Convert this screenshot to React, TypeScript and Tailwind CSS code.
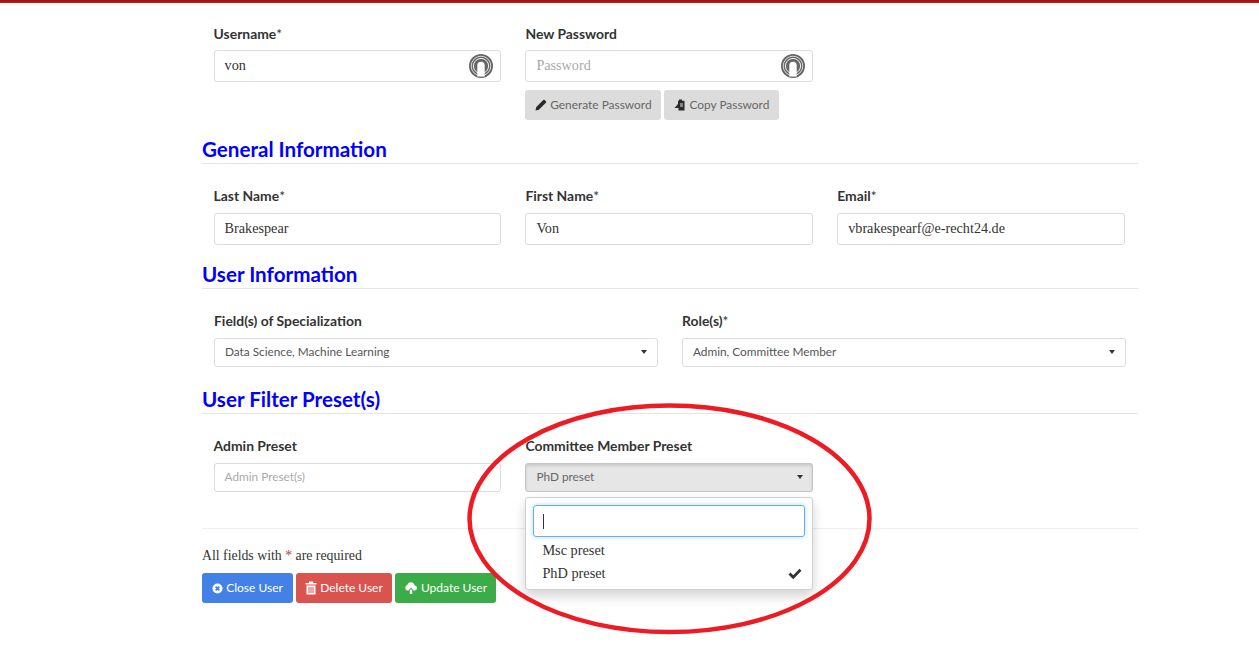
import React from "react";

const sans = "font-['Lato','Open_Sans',sans-serif]";
const serif = "font-['Liberation_Serif',serif]";

function Fingerprint() {
  return (
    <svg viewBox="0 0 24 24" className="h-[24px] w-[24px]">
      <circle cx="12" cy="12" r="12" fill="#666" />
      <circle cx="12" cy="12" r="9.800" fill="none" stroke="#d8d8d8" strokeWidth="1" />
      <circle cx="12" cy="12" r="7.600" fill="none" stroke="#f4f4f4" strokeWidth="1" />
      <path d="M8.300 22.500V11.500a3.700 3.700 0 0 1 7.400 0v11z" fill="#fff" />
    </svg>
  );
}

function Caret() {
  return <span className="h-0 w-0 border-x-[3.5px] border-t-[4px] border-x-transparent border-t-[#333]" />;
}

function Label({ children, req = false, tight = false }: { children: React.ReactNode; req?: boolean; tight?: boolean }) {
  return (
    <div className={`${sans} ${tight ? "mb-[6px]" : "mb-[7px]"} h-[20px] text-[13.9px] font-bold leading-[20px] text-[#333]`}>
      {children}
      {req && <span className="font-normal">*</span>}
    </div>
  );
}

function TextInput({ value, placeholder, icon = false }: { value?: string; placeholder?: string; icon?: boolean }) {
  return (
    <div className="flex h-[32px] items-center justify-between rounded-[3px] border border-[#dcdcdc] bg-white pl-[10px] pr-[7px]">
      <span className={`${serif} text-[14.2px] ${value ? "text-[#333]" : "text-[#aaa]"}`}>{value ?? placeholder}</span>
      {icon && <Fingerprint />}
    </div>
  );
}

function Select({ value }: { value: string }) {
  return (
    <div className="flex h-[29px] items-center justify-between rounded-[3px] border border-[#dcdcdc] bg-white pb-[1px] pl-[10px] pr-[10px]">
      <span className={`${sans} text-[11.8px] text-[#555]`}>{value}</span>
      <Caret />
    </div>
  );
}

function Section({ title }: { title: string }) {
  return (
    <div className="h-[26px] border-b border-[#e5e5e5]">
      <h2 className={`${sans} text-[20.6px] font-bold leading-[22px] text-[#0000ff]`}>{title}</h2>
    </div>
  );
}

function ActionButton({ color, icon, children, width }: { color: string; icon: React.ReactNode; children: React.ReactNode; width: string }) {
  return (
    <div className={`${sans} ${color} ${width} flex h-[30px] items-center justify-center gap-[3px] rounded-[3px] text-[12px] text-white`}>
      {icon}
      {children}
    </div>
  );
}

function GreyButton({ width, icon, children }: { width: string; icon: React.ReactNode; children: React.ReactNode }) {
  return (
    <div className={`${sans} ${width} flex h-[30px] items-center justify-center gap-[3px] rounded-[3px] bg-[#dcdcdc] text-[11.9px] text-[#666]`}>
      {icon}
      {children}
    </div>
  );
}

export default function App() {
  return (
    <div className="relative h-[653px] w-[1259px] overflow-hidden bg-white">
      <div className="h-[3px] bg-gradient-to-b from-[#8e1414] to-[#c91c1c]" />

      <div className="ml-[202px] w-[936px] pt-[21px]">
        <div className="flex gap-[24.3px] px-[11.6px]">
          <div className="w-[287.5px]">
            <Label req tight>Username</Label>
            <TextInput value="von" icon />
          </div>
          <div className="w-[287.5px]">
            <Label tight>New Password</Label>
            <TextInput placeholder="Password" icon />
            <div className="mt-[8px] flex gap-[3px]">
              <GreyButton
                width="w-[136px]"
                icon={
                  <svg viewBox="0 0 12 12" className="h-[12px] w-[12px]" fill="#2a2a2a">
                    <path d="M0.500 11.500l.8-3.400L8.300 1.100a1 1 0 0 1 1.400 0l1.200 1.200a1 1 0 0 1 0 1.400L3.900 10.700z" />
                  </svg>
                }
              >
                Generate Password
              </GreyButton>
              <GreyButton
                width="w-[115px]"
                icon={
                  <svg viewBox="0 0 12 12" className="h-[12px] w-[12px]" fill="#2a2a2a">
                    <path d="M5 0.500h3v1.300h2.500V11.500H4.500V9H0.500L4 5V1.800h1z" />
                    <path d="M6 4.500h3v1H6zM6 6.500h3v1H6z" fill="#ddd" />
                  </svg>
                }
              >
                Copy Password
              </GreyButton>
            </div>
          </div>
        </div>

        <div className="mt-[18px]">
          <Section title="General Information" />
        </div>
        <div className="mt-[22px] flex gap-[24.3px] px-[11.6px]">
          <div className="w-[287.5px]">
            <Label req>Last Name</Label>
            <TextInput value="Brakespear" />
          </div>
          <div className="w-[287.5px]">
            <Label req>First Name</Label>
            <TextInput value="Von" />
          </div>
          <div className="w-[287.5px]">
            <Label req>Email</Label>
            <TextInput value="vbrakespearf@e-recht24.de" />
          </div>
        </div>

        <div className="mt-[18px]">
          <Section title="User Information" />
        </div>
        <div className="mt-[22px] flex gap-[24px] px-[12px]">
          <div className="w-[444px]">
            <Label>Field(s) of Specialization</Label>
            <Select value="Data Science, Machine Learning" />
          </div>
          <div className="w-[444px]">
            <Label req>Role(s)</Label>
            <Select value="Admin, Committee Member" />
          </div>
        </div>

        <div className="mt-[21px]">
          <Section title="User Filter Preset(s)" />
        </div>
        <div className="mt-[22px] flex gap-[24.3px] px-[11.6px]">
          <div className="w-[287.5px]">
            <Label>Admin Preset</Label>
            <div className="flex h-[29px] items-center rounded-[3px] border border-[#dcdcdc] pb-[1px] pl-[10px]">
              <span className={`${sans} text-[11.8px] text-[#aaa]`}>Admin Preset(s)</span>
            </div>
          </div>
          <div className="relative w-[287.5px]">
            <Label>Committee Member Preset</Label>
            <div className="flex h-[29px] items-center justify-between rounded-[3px] border border-[#c4c4c4] bg-[#e6e6e6] pb-[1px] pl-[10px] pr-[9px] shadow-[inset_0_2px_3px_rgba(0,0,0,0.12)]">
              <span className={`${sans} text-[11.8px] text-[#666]`}>PhD preset</span>
              <Caret />
            </div>
            <div className="absolute left-0 top-[61px] z-10 h-[93px] w-[288px] rounded-[3px] border border-[#d0d0d0] bg-white px-[7px] pt-[7px] shadow-[0_6px_12px_rgba(0,0,0,0.175)]">
              <div className="flex h-[32px] items-center rounded-[3px] border border-[#66afe9] pl-[9px] shadow-[0_0_4px_rgba(102,175,233,0.5)]">
                <span className="h-[15px] w-px bg-[#333]" />
              </div>
              <div className={`${serif} mt-[2px] flex h-[23px] items-center pl-[9px] text-[14.3px] text-[#333]`}>Msc preset</div>
              <div className={`${serif} flex h-[23px] items-center justify-between pl-[9px] pr-[3px] text-[14.3px] text-[#333]`}>
                PhD preset
                <svg viewBox="0 0 14 12" className="h-[12px] w-[14px]" fill="#333">
                  <path d="M0.500 6.500L2.500 4.500L5.200 7.200L11.500 0.800L13.500 2.800L5.200 11.200z" />
                </svg>
              </div>
            </div>
          </div>
        </div>

        <div className="mt-[36px] border-t border-[#eeeeee] pt-[18px]">
          <p className={`${serif} text-[13.8px] leading-[18px] text-[#333]`}>
            All fields with <span className="text-[#a94442]">*</span> are required
          </p>
          <div className="mt-[8px] flex gap-[3px]">
            <ActionButton
              color="bg-[#4481e6]"
              width="w-[91px]"
              icon={
                <svg viewBox="0 0 12 12" className="h-[11px] w-[11px]">
                  <circle cx="6" cy="6" r="5.500" fill="#fff" />
                  <path d="M4 4l4 4M8 4l-4 4" stroke="#4481e6" strokeWidth="1.800" />
                </svg>
              }
            >
              Close User
            </ActionButton>
            <ActionButton
              color="bg-[#d9534f]"
              width="w-[96px]"
              icon={
                <svg viewBox="0 0 12 13" className="h-[14px] w-[12px]" fill="#fff">
                  <path d="M4 0h4v1.500h3.500V3H.5V1.500H4zM1.500 4h9v9h-9zM3.500 5.500v6h1v-6zM5.500 5.500v6h1v-6zM7.500 5.500v6h1v-6z" fillRule="evenodd" />
                </svg>
              }
            >
              Delete User
            </ActionButton>
            <ActionButton
              color="bg-[#3bac47]"
              width="w-[101px]"
              icon={
                <svg viewBox="0 0 14 12" className="h-[12px] w-[14px]" fill="#fff">
                  <path d="M3 8.500A3 3 0 0 1 3.200 3 3.800 3.800 0 0 1 10.500 3.200 2.700 2.700 0 0 1 11 8.500H9.500L7 5.500 4.500 8.500zM5.800 8.500L7 7l1.200 1.500V12H5.800z" />
                </svg>
              }
            >
              Update User
            </ActionButton>
          </div>
        </div>
      </div>

      <svg className="pointer-events-none absolute left-0 top-0 z-20" width="1259" height="653" viewBox="0 0 1259 653">
        <ellipse cx="669.500" cy="518.800" rx="200" ry="113.300" fill="none" stroke="#ed1c24" strokeWidth="4.500" />
      </svg>
    </div>
  );
}
